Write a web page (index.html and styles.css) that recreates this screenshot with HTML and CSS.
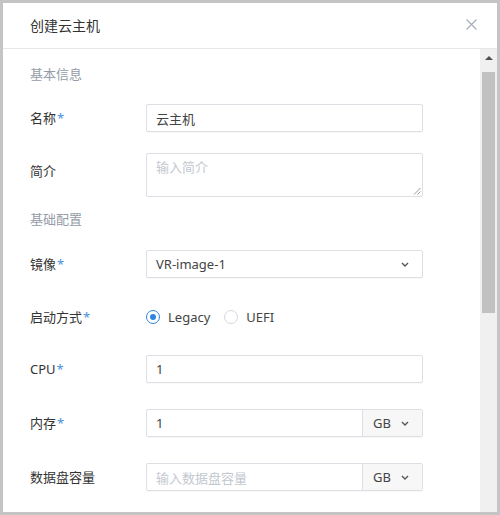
FILE: index.html
```html
<!DOCTYPE html>
<html lang="zh-CN">
<head>
<meta charset="utf-8">
<title>创建云主机</title>
<link rel="stylesheet" href="styles.css">
</head>
<body>
<div class="dialog">
  <div class="dialog-header">
    <span class="dialog-title">创建云主机</span>
    <span class="dialog-close">
      <svg width="11" height="11" viewBox="0 0 11 11"><path d="M0.5 0.5L10.5 10.5M10.5 0.5L0.5 10.5" stroke="#a3acb9" stroke-width="1.1" fill="none"/></svg>
    </span>
  </div>
  <div class="dialog-main">
    <div class="dialog-body">
      <div class="section-title">基本信息</div>
      <div class="form-item gap-sm">
        <label class="form-label">名称<span class="req">*</span></label>
        <div class="input"><span class="value">云主机</span></div>
      </div>
      <div class="form-item gap-xs textarea-item">
        <label class="form-label">简介</label>
        <div class="textarea"><span class="placeholder">输入简介</span>
          <svg class="resize" width="8" height="8" viewBox="0 0 8 8"><path d="M7.5 1L1 7.5M7.5 4.5L4.5 7.5" stroke="#9a9a9a" stroke-width="1" fill="none"/></svg>
        </div>
      </div>
      <div class="section-title sec2">基础配置</div>
      <div class="form-item">
        <label class="form-label">镜像<span class="req">*</span></label>
        <div class="input select"><span class="value">VR-image-1</span>
          <svg class="chev" width="8" height="5" viewBox="0 0 8 5"><path d="M1 1L4 4L7 1" stroke="#555" stroke-width="1.4" fill="none"/></svg>
        </div>
      </div>
      <div class="form-item radio-item">
        <label class="form-label">启动方式<span class="req">*</span></label>
        <div class="radio-group">
          <span class="radio checked"><span class="radio-dot"></span></span><span class="radio-text">Legacy</span>
          <span class="radio"></span><span class="radio-text">UEFI</span>
        </div>
      </div>
      <div class="form-item">
        <label class="form-label">CPU<span class="req">*</span></label>
        <div class="input"><span class="value">1</span></div>
      </div>
      <div class="form-item">
        <label class="form-label">内存<span class="req">*</span></label>
        <div class="input group"><span class="value grow">1</span>
          <span class="addon">GB<svg class="chev" width="8" height="5" viewBox="0 0 8 5"><path d="M1 1L4 4L7 1" stroke="#555" stroke-width="1.4" fill="none"/></svg></span>
        </div>
      </div>
      <div class="form-item">
        <label class="form-label">数据盘容量</label>
        <div class="input group"><span class="placeholder grow">输入数据盘容量</span>
          <span class="addon">GB<svg class="chev" width="8" height="5" viewBox="0 0 8 5"><path d="M1 1L4 4L7 1" stroke="#555" stroke-width="1.4" fill="none"/></svg></span>
        </div>
      </div>
    </div>
    <div class="scrollbar">
      <div class="sb-btn"><span class="sb-arrow"></span></div>
      <div class="sb-thumb"></div>
    </div>
  </div>
</div>
</body>
</html>
```
FILE: styles.css
```css
* { box-sizing: border-box; }
html, body { margin: 0; padding: 0; }
body {
  background: #c4c4c4;
  font-family: "Noto Sans", "Noto Sans CJK SC", sans-serif;
  font-size: 13px;
  color: #333;
  padding: 3px;
  width: 500px;
  height: 515px;
  overflow: hidden;
}
.dialog {
  width: 494px;
  height: 509px;
  background: #fff;
  display: flex;
  flex-direction: column;
  overflow: hidden;
}
.dialog-header {
  height: 46px;
  flex: none;
  border-bottom: 1px solid #e6e6e6;
  display: flex;
  align-items: center;
  justify-content: space-between;
  padding: 0 20px 1px 27px;
}
.dialog-title { font-size: 14px; color: #333; }
.dialog-close { display: flex; margin-top: -1px; }
.dialog-main { flex: 1; display: flex; overflow: hidden; }
.dialog-body { flex: 1; padding: 15px 0 0 27px; }
.section-title {
  font-size: 13px;
  line-height: 20px;
  color: #959ca8;
  margin-bottom: 20px;
}
.sec2 { margin-bottom: 21px; }
.form-item {
  display: flex;
  align-items: center;
  margin-bottom: 26px;
}
.gap-sm { margin-bottom: 21px; }
.gap-xs { margin-bottom: 12px; }
.textarea-item { align-items: flex-start; }
.textarea-item .form-label { padding-top: 8px; }
.form-label {
  width: 116px;
  flex: none;
  line-height: 20px;
  color: #333;
}
.req { color: #4a8fdb; margin-left: 1px; }
.input {
  width: 277px;
  height: 28px;
  border: 1px solid #dcdfe4;
  border-radius: 2px;
  display: flex;
  align-items: center;
  padding: 0 0 0 9px;
  box-shadow: 0 1px 1px rgba(0,0,0,0.03);
}
.value { color: #444; }
.placeholder { color: #c3c8d0; }
.select { justify-content: space-between; padding-right: 13px; }
.chev { display: block; }
.group { padding-right: 0; }
.grow { flex: 1; }
.addon {
  width: 60px;
  height: 100%;
  background: #f7f7f7;
  border-left: 1px solid #dcdfe4;
  display: flex;
  align-items: center;
  justify-content: space-between;
  padding: 0 13px 0 10px;
  color: #444;
}
.textarea {
  width: 277px;
  height: 44px;
  border: 1px solid #dcdfe4;
  border-radius: 2px;
  padding: 3px 9px;
  position: relative;
}
.resize { position: absolute; right: 1px; bottom: 1px; }
.radio-item { height: 25px; }
.radio-group { display: flex; align-items: center; }
.radio {
  width: 14px;
  height: 14px;
  border: 1px solid #d4d8de;
  border-radius: 50%;
  display: flex;
  align-items: center;
  justify-content: center;
  margin-right: 8px;
}
.radio.checked { border-color: #2e86de; }
.radio-dot { width: 6px; height: 6px; border-radius: 50%; background: #2e86de; }
.radio-text { margin-right: 14px; color: #444; }
.scrollbar {
  width: 17px;
  flex: none;
  background: #f0f0f0;
  display: flex;
  flex-direction: column;
  align-items: center;
}
.sb-btn {
  height: 17px;
  width: 17px;
  display: flex;
  align-items: center;
  justify-content: center;
}
.sb-arrow {
  width: 0; height: 0;
  border-left: 4px solid transparent;
  border-right: 4px solid transparent;
  border-bottom: 4px solid #505050;
}
.sb-thumb {
  margin-top: 6px;
  width: 13px;
  height: 241px;
  background: #c1c1c1;
}
```
